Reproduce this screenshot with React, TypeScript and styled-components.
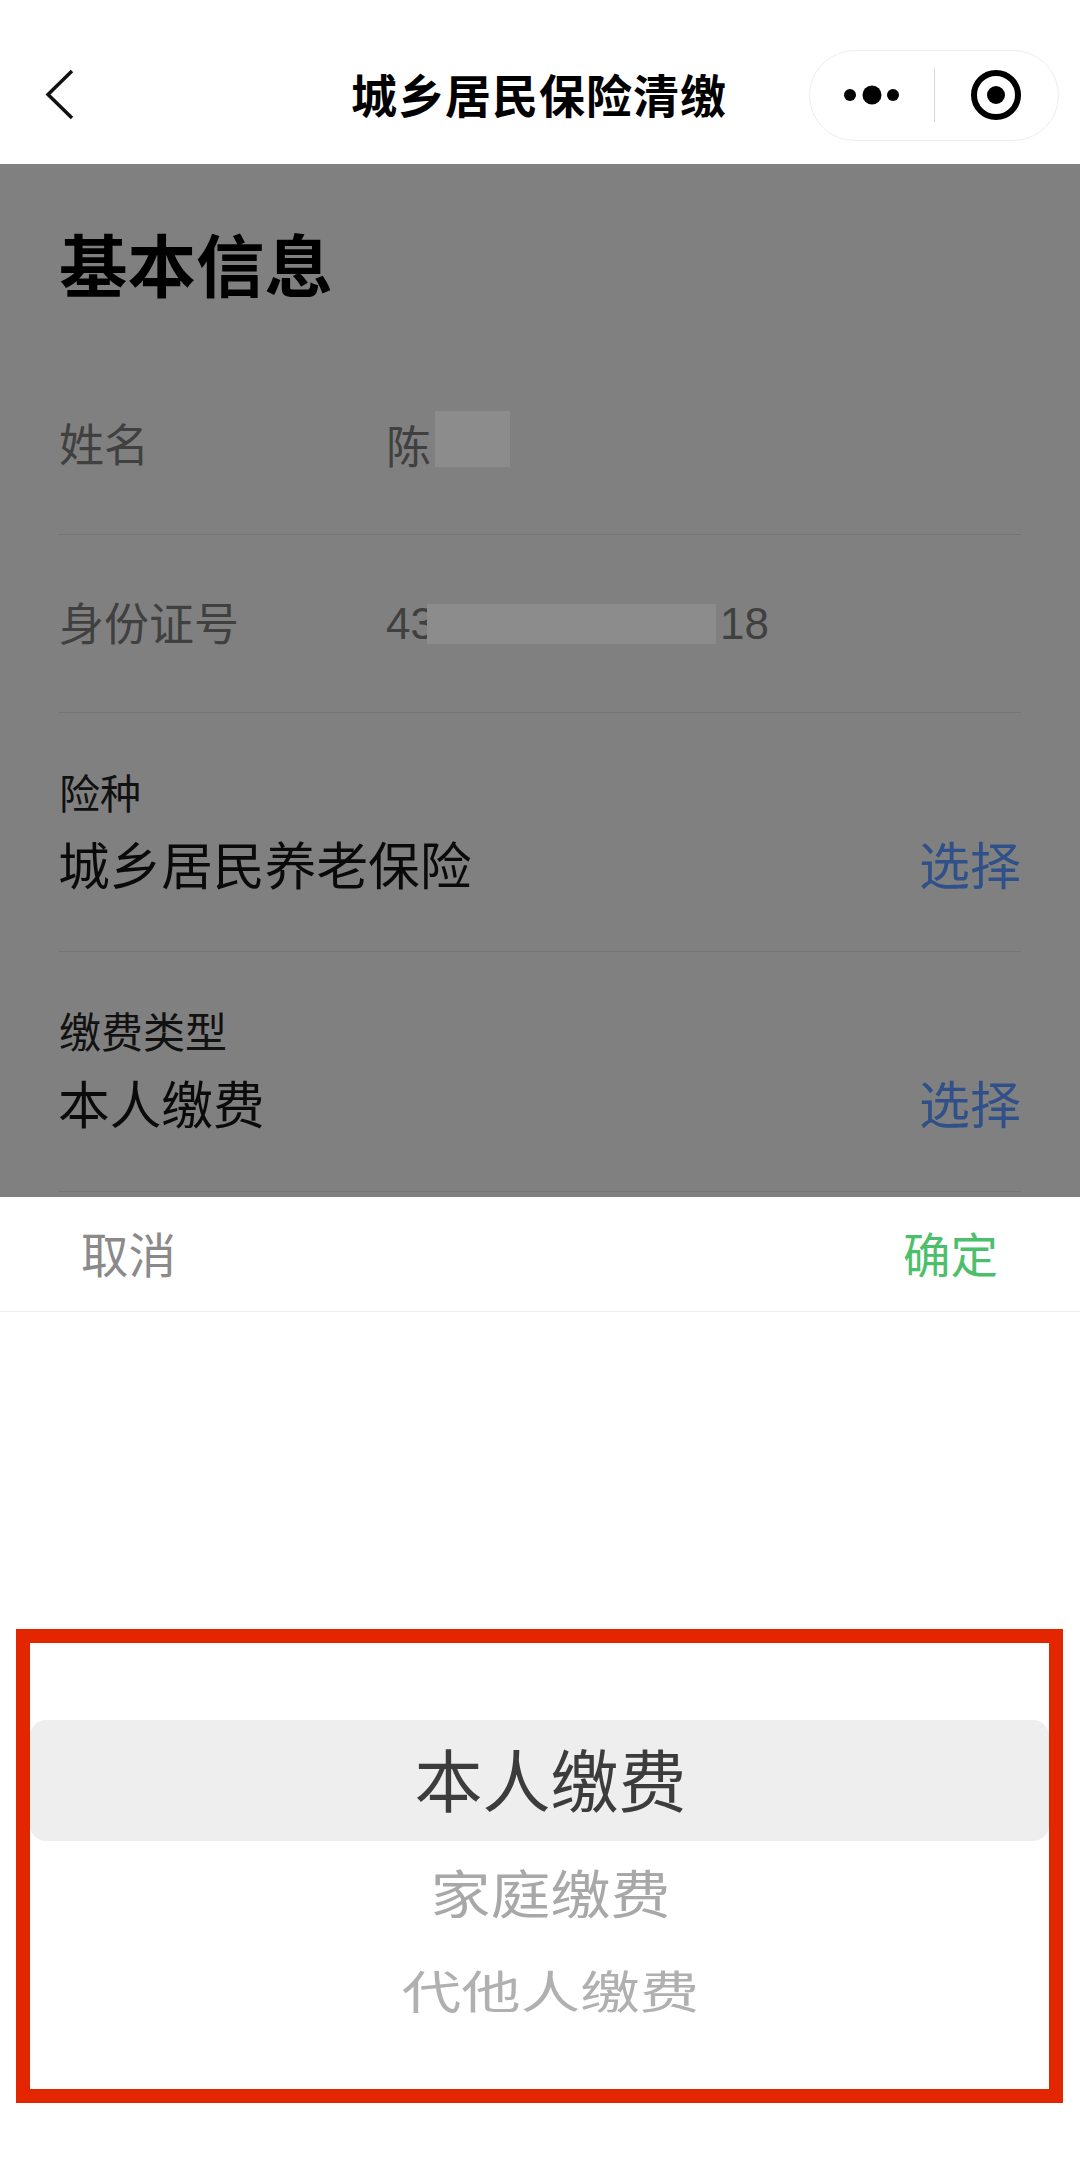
import styled, {createGlobalStyle} from "styled-components";

const GlobalStyle = createGlobalStyle`
    * {
        box-sizing: border-box;
    }
    html, body {
        margin: 0;
        padding: 0;
        background: #fff;
    }
    body {
        font-family: "Noto Sans CJK SC", "Noto Sans", sans-serif;
    }
`

const Page = styled.div`
    width: 1080px;
    height: 2160px;
    display: flex;
    flex-direction: column;
    overflow: hidden;
`

const NavBar = styled.header`
    height: 164px;
    flex: none;
    display: grid;
    grid-template-columns: 1fr auto 1fr;
    align-items: center;
    padding: 26px 21px 0;
    background: #fff;
`

const BackIcon = styled.svg`
    width: 30px;
    height: 52px;
    margin-left: 24px;
`

const NavTitle = styled.h1`
    margin: 0 2px 0 0;
    padding-bottom: 4px;
    font-size: 46px;
    line-height: 50px;
    font-weight: 600;
    letter-spacing: 1px;
    color: #000;
`

const Capsule = styled.div`
    justify-self: end;
    width: 250px;
    height: 91px;
    display: flex;
    align-items: center;
    border: 1px solid #ededed;
    border-radius: 46px;
`

const CapsuleSlot = styled.div`
    flex: 1;
    display: flex;
    align-items: center;
    justify-content: center;
`

const CapsuleDivider = styled.div`
    width: 1px;
    height: 54px;
    background: #d6d6d6;
`

const Dimmed = styled.main`
    height: 1033px;
    flex: none;
    padding: 65px 59px 0 58px;
    background: #808080;
    overflow: hidden;
`

const SectionTitle = styled.h2`
    margin: 0 0 57px 1px;
    font-size: 68.5px;
    line-height: 68px;
    font-weight: 700;
    color: #000;
`

const InfoRow = styled.div<{ $h: number }>`
    height: ${p => p.$h}px;
    display: flex;
    align-items: center;
    border-bottom: 1px solid #757575;
    font-size: 45px;
    color: #404040;
`

const InfoLabel = styled.div`
    width: 328px;
    padding-left: 1px;
    margin-bottom: 3px;
    flex: none;
    line-height: 50px;
`

const IdDigits = styled.span`
    font-family: "Liberation Sans", sans-serif;
    font-size: 44px;
    line-height: 50px;
`

const Mask = styled.div<{ $w: number; $h: number; $left?: number; $up?: number }>`
    width: ${p => p.$w}px;
    height: ${p => p.$h}px;
    margin-left: ${p => p.$left ?? 0}px;
    margin-right: 4px;
    margin-top: ${p => p.$up ? -p.$up : 0}px;
    background: #8c8c8c;
`

const SelectRow = styled.div<{ $h: number }>`
    height: ${p => p.$h}px;
    padding-top: 55px;
    border-bottom: 1px solid #757575;
`

const SelectLabel = styled.div<{ $size: number }>`
    padding-left: 1px;
    font-size: ${p => p.$size}px;
    line-height: 46px;
    color: #111;
`

const SelectLine = styled.div`
    display: flex;
    justify-content: space-between;
    align-items: center;
    margin-top: 19px;
    font-size: 51.7px;
    line-height: 60px;
    color: #0a0a0a;
`

const SelectAction = styled.span`
    font-size: 51px;
    color: #2f5088;
`

const Sheet = styled.section`
    flex: 1;
    background: #fff;
`

const SheetBar = styled.div`
    height: 115px;
    display: flex;
    align-items: center;
    justify-content: space-between;
    padding: 0 82px 4px 81px;
    border-bottom: 1px solid #ededed;
    font-size: 47.5px;
`

const SheetButton = styled.span<{ $primary?: boolean }>`
    color: ${p => p.$primary ? "#4dbf6c" : "#8a8a8a"};
`

const Callout = styled.div`
    width: 1047px;
    height: 474px;
    margin: 317px 0 0 16px;
    padding-top: 77px;
    border: 14px solid #e42600;
`

const WheelRow = styled.div<{ $h: number; $selected?: boolean }>`
    height: ${p => p.$h}px;
    display: flex;
    align-items: center;
    justify-content: center;
    padding-left: 22px;
    padding-bottom: ${p => p.$selected ? "6px" : "2px"};
    background: ${p => p.$selected ? "#eeeeee" : "transparent"};
    border-radius: ${p => p.$selected ? "16px" : "0"};
`

const WheelText = styled.span<{ $size: number; $color: string; $squash?: number }>`
    font-size: ${p => p.$size}px;
    line-height: 1;
    color: ${p => p.$color};
    transform: scaleY(${p => p.$squash ?? 1});
`

export default function App() {
    return <Page>
        <GlobalStyle/>
        <NavBar>
            <BackIcon viewBox="0 0 30 52">
                <polyline points="27,2 3,25.5 27,49" fill="none" stroke="#111" strokeWidth="3.5"/>
            </BackIcon>
            <NavTitle>城乡居民保险清缴</NavTitle>
            <Capsule>
                <CapsuleSlot>
                    <svg width="62" height="22" viewBox="0 0 62 22">
                        <circle cx="9" cy="11" r="6"/>
                        <circle cx="31" cy="11" r="9.5"/>
                        <circle cx="52" cy="11" r="6"/>
                    </svg>
                </CapsuleSlot>
                <CapsuleDivider/>
                <CapsuleSlot>
                    <svg width="52" height="52" viewBox="0 0 52 52">
                        <circle cx="26" cy="26" r="22" fill="none" stroke="#000" strokeWidth="6"/>
                        <circle cx="26" cy="26" r="9"/>
                    </svg>
                </CapsuleSlot>
            </Capsule>
        </NavBar>
        <Dimmed>
            <SectionTitle>基本信息</SectionTitle>
            <InfoRow $h={181}>
                <InfoLabel>姓名</InfoLabel>
                <span>陈</span>
                <Mask $w={75} $h={56} $left={4} $up={10}/>
            </InfoRow>
            <InfoRow $h={178}>
                <InfoLabel>身份证号</InfoLabel>
                <IdDigits>43</IdDigits>
                <Mask $w={289} $h={40} $left={-8}/>
                <IdDigits>18</IdDigits>
            </InfoRow>
            <SelectRow $h={239}>
                <SelectLabel $size={41}>险种</SelectLabel>
                <SelectLine>
                    城乡居民养老保险
                    <SelectAction>选择</SelectAction>
                </SelectLine>
            </SelectRow>
            <SelectRow $h={240}>
                <SelectLabel $size={42}>缴费类型</SelectLabel>
                <SelectLine>
                    本人缴费
                    <SelectAction>选择</SelectAction>
                </SelectLine>
            </SelectRow>
        </Dimmed>
        <Sheet>
            <SheetBar>
                <SheetButton>取消</SheetButton>
                <SheetButton $primary>确定</SheetButton>
            </SheetBar>
            <Callout>
                <WheelRow $h={121} $selected>
                    <WheelText $size={68} $color="#3c3c3c">本人缴费</WheelText>
                </WheelRow>
                <WheelRow $h={102}>
                    <WheelText $size={60} $color="#a8a8a8" $squash={0.88}>家庭缴费</WheelText>
                </WheelRow>
                <WheelRow $h={96}>
                    <WheelText $size={59.5} $color="#b0b0b0" $squash={0.76}>代他人缴费</WheelText>
                </WheelRow>
            </Callout>
        </Sheet>
    </Page>
}
